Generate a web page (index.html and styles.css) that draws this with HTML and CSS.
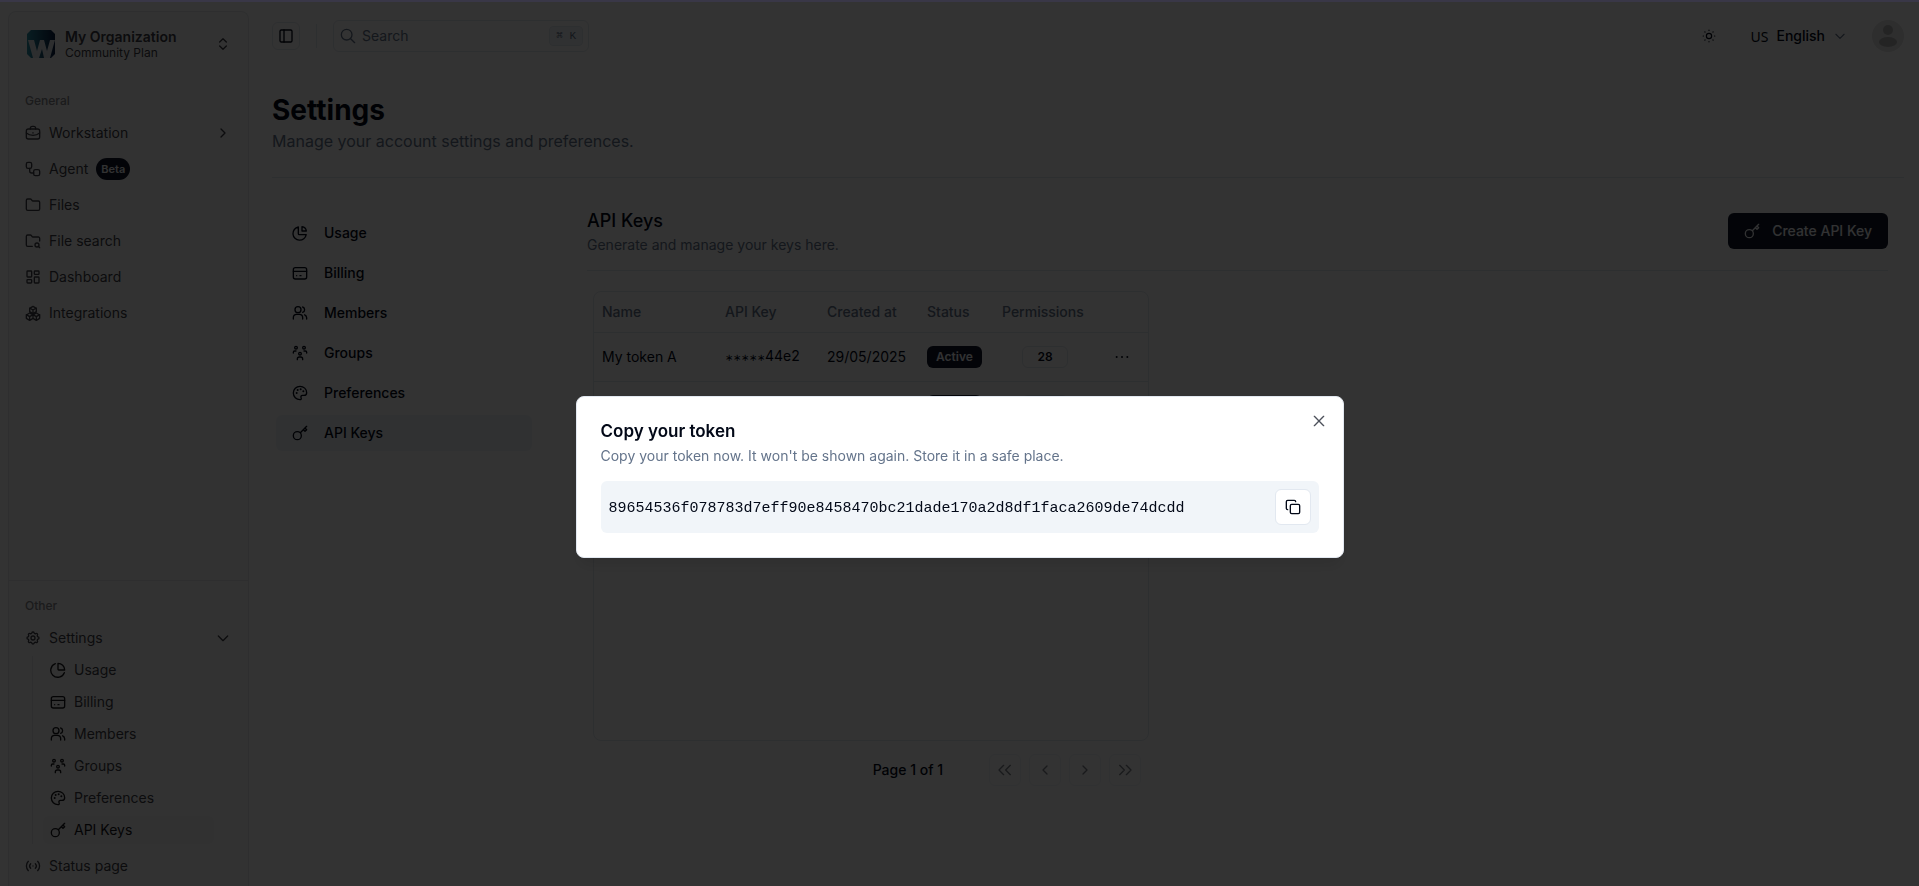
FILE: index.html
```html
<!DOCTYPE html>
<html lang="en">
<head>
    <meta charset="UTF-8">
    <title>Settings - API Keys</title>
    <link rel="stylesheet" href="styles.css">
</head>
<body>
<svg class="sprite" aria-hidden="true">
    <symbol id="briefcase" viewBox="0 0 24 24"><rect x="2" y="6" width="20" height="15" rx="3"/><path d="M8 6V5a3 3 0 0 1 3-3h2a3 3 0 0 1 3 3v1M2 12c3 2.500 6 3.500 10 3.500S19 14.500 22 12M12 11.500v.5"/></symbol>
    <symbol id="workflow" viewBox="0 0 24 24"><rect x="2" y="2" width="8" height="9" rx="2.500"/><rect x="13" y="13" width="9" height="9" rx="2.500"/><path d="M7 11v4a3 3 0 0 0 3 3h3"/></symbol>
    <symbol id="folder" viewBox="0 0 24 24"><path d="M20 20a2 2 0 0 0 2-2V8a2 2 0 0 0-2-2h-7.900a2 2 0 0 1-1.690-.9L9.600 3.900A2 2 0 0 0 7.930 3H4a2 2 0 0 0-2 2v13a2 2 0 0 0 2 2Z"/></symbol>
    <symbol id="folder-search" viewBox="0 0 24 24"><path d="M11 20H4a2 2 0 0 1-2-2V5a2 2 0 0 1 2-2h3.930a2 2 0 0 1 1.660.9l.82 1.200a2 2 0 0 0 1.660.9H20a2 2 0 0 1 2 2v4M22 22l-2-2"/><circle cx="18" cy="18" r="3"/></symbol>
    <symbol id="dashboard" viewBox="0 0 24 24"><rect x="3" y="3" width="7" height="9" rx="1"/><rect x="14" y="3" width="7" height="5" rx="1"/><rect x="14" y="12" width="7" height="9" rx="1"/><rect x="3" y="16" width="7" height="5" rx="1"/></symbol>
    <symbol id="boxes" viewBox="0 0 24 24"><path d="M7 12l5 3v5l-5 3-5-3v-5zM17 12l5 3v5l-5 3-5-3v-5zM12 2l5 3v5l-5 3-5-3V5zM7 17.500l-5-3M7 17.500l5-3M7 17.500V23M17 17.500l-5-3M17 17.500l5-3M17 17.500V23M12 7.500l-5-3M12 7.500l5-3M12 7.500V13"/></symbol>
    <symbol id="gear" viewBox="0 0 24 24"><path d="M10.300 4.300c.4-1.750 2.950-1.750 3.400 0a1.700 1.700 0 0 0 2.550 1.070c1.550-.94 3.320.83 2.380 2.370a1.700 1.700 0 0 0 1.060 2.580c1.760.42 1.760 2.920 0 3.350a1.700 1.700 0 0 0-1.060 2.580c.94 1.540-.83 3.310-2.380 2.370a1.700 1.700 0 0 0-2.550 1.060c-.45 1.750-3 1.750-3.400 0a1.700 1.700 0 0 0-2.580-1.060c-1.540.94-3.310-.83-2.370-2.370a1.700 1.700 0 0 0-1.060-2.580c-1.760-.43-1.760-2.930 0-3.350a1.700 1.700 0 0 0 1.060-2.580c-.94-1.540.83-3.310 2.370-2.370 1 .6 2.300.07 2.580-1.070z"/><circle cx="12" cy="12" r="3"/></symbol>
    <symbol id="pie" viewBox="0 0 24 24"><path d="M12 2v9a1 1 0 0 0 1 1h9A10 10 0 0 0 12 2zM21.500 16A10.500 10.500 0 1 1 8 2.500"/></symbol>
    <symbol id="pie-slice" viewBox="0 0 24 24"><path d="M9.500 3a10 10 0 1 0 11.800 11.500H11a1.500 1.500 0 0 1-1.500-1.500z"/><path d="M15 2.500V9h6.500A7.500 7.500 0 0 0 15 2.500z"/></symbol>
    <symbol id="card" viewBox="0 0 24 24"><rect x="2" y="4" width="20" height="17" rx="3"/><path d="M2 9.500h20M7 16h.01M12 16h1.500"/></symbol>
    <symbol id="users" viewBox="0 0 24 24"><path d="M2 21v-2a5 5 0 0 1 5-5h4a5 5 0 0 1 5 5v2M22 21v-2a5 5 0 0 0-3-4.300M16 3a4.200 4.200 0 0 1 0 8"/><circle cx="9" cy="7" r="4.500"/></symbol>
    <symbol id="group" viewBox="0 0 24 24"><circle cx="6" cy="4" r="2"/><circle cx="18" cy="4" r="2"/><circle cx="12" cy="13" r="2"/><path d="M2 12v-1a2 2 0 0 1 2-2h2M22 12v-1a2 2 0 0 0-2-2h-2M8 22v-1a3 3 0 0 1 3-3h2a3 3 0 0 1 3 3v1"/></symbol>
    <symbol id="palette" viewBox="0 0 24 24"><path d="M12 2a10 10 0 0 0 0 20c1.700 0 2.300-1.300 1.700-2.500-1-2 0-4 2-4H18c2.600 0 4-1.500 4-4C22 6 17.500 2 12 2z"/><path d="M7 12h.01M8.500 7.500h.01M13 6.500h.01M17 9.500h.01" stroke-width="3"/></symbol>
    <symbol id="key" viewBox="0 0 24 24"><circle cx="8" cy="16" r="6"/><path d="M12.500 11.500 22 2M17 7l2.500 2.500L22 7l-2.500-2.500"/></symbol>
    <symbol id="broadcast" viewBox="0 0 24 24"><path d="M5 19a10 10 0 0 1 0-14M19 5a10 10 0 0 1 0 14M8.500 15.500a5 5 0 0 1 0-7M15.500 8.500a5 5 0 0 1 0 7M12 12h.01"/></symbol>
    <symbol id="chevron-right" viewBox="0 0 24 24"><path d="m9 18 6-6-6-6"/></symbol>
    <symbol id="chevron-left" viewBox="0 0 24 24"><path d="m15 18-6-6 6-6"/></symbol>
    <symbol id="chevron-down" viewBox="0 0 24 24"><path d="m5 9 7 7 7-7"/></symbol>
    <symbol id="chevrons-updown" viewBox="0 0 24 24"><path d="m7 15 5 5 5-5M7 9l5-5 5 5"/></symbol>
    <symbol id="first" viewBox="0 0 24 24"><path d="m10 19-7-7 7-7M20 19l-7-7 7-7"/></symbol>
    <symbol id="last" viewBox="0 0 24 24"><path d="m4 19 7-7-7-7M14 19l7-7-7-7"/></symbol>
    <symbol id="panel" viewBox="0 0 24 24"><rect x="3" y="3" width="18" height="18" rx="2"/><path d="M9 3v18"/></symbol>
    <symbol id="search" viewBox="0 0 24 24"><circle cx="10" cy="10" r="8"/><path d="m22 22-6-6"/></symbol>
    <symbol id="sun" viewBox="0 0 24 24"><circle cx="12" cy="12" r="4.500"/><path d="M12 2v.5M12 21.500v.5M2 12h.5M21.500 12h.5M4.900 4.900l.3.3M18.800 18.800l.3.3M4.900 19.100l.3-.3M18.800 5.200l.3-.3"/></symbol>
    <symbol id="dots" viewBox="0 0 24 24"><path d="M4 12h.01M12 12h.01M20 12h.01" stroke-width="3"/></symbol>
    <symbol id="close" viewBox="0 0 24 24"><path d="M5 5l14 14M19 5 5 19"/></symbol>
    <symbol id="copy" viewBox="0 0 24 24"><rect x="8" y="8" width="14" height="14" rx="2"/><path d="M4 16c-1.100 0-2-.9-2-2V4c0-1.100.9-2 2-2h10c1.100 0 2 .9 2 2"/></symbol>
</svg>

<div class="app">
    <aside class="sidebar">
        <button class="org">
            <svg class="logo" viewBox="0 0 28 28">
                <defs>
                    <linearGradient id="logo-fill" x1="0" y1="0" x2="1" y2="0">
                        <stop offset="0" stop-color="#2a91a8"/>
                        <stop offset="1" stop-color="#0b1d42"/>
                    </linearGradient>
                </defs>
                <path d="M4 0h20l4 4v20l-4 4H4l-4-4V4z" fill="url(#logo-fill)"/>
                <path d="M1 10h6l3 11 3-11h4l3 11 3-11h5l-5 18h-6l-2-9-3 9H6z" fill="#dfe5ea"/>
            </svg>
            <span class="org-text">
                <span class="org-name">My Organization</span>
                <span class="org-plan">Community Plan</span>
            </span>
            <svg class="icon"><use href="#chevrons-updown"/></svg>
        </button>

        <nav class="nav">
            <div class="nav-label">General</div>
            <a class="nav-item" href="#"><svg class="icon"><use href="#briefcase"/></svg>Workstation<svg class="icon end"><use href="#chevron-right"/></svg></a>
            <a class="nav-item" href="#"><svg class="icon"><use href="#workflow"/></svg>Agent<span class="badge round">Beta</span></a>
            <a class="nav-item" href="#"><svg class="icon"><use href="#folder"/></svg>Files</a>
            <a class="nav-item" href="#"><svg class="icon"><use href="#folder-search"/></svg>File search</a>
            <a class="nav-item" href="#"><svg class="icon"><use href="#dashboard"/></svg>Dashboard</a>
            <a class="nav-item" href="#"><svg class="icon"><use href="#boxes"/></svg>Integrations</a>
        </nav>

        <nav class="nav nav-other">
            <div class="nav-label">Other</div>
            <a class="nav-item" href="#"><svg class="icon"><use href="#gear"/></svg>Settings<svg class="icon end"><use href="#chevron-down"/></svg></a>
            <div class="subnav">
                <a class="sub-item" href="#"><svg class="icon"><use href="#pie"/></svg>Usage</a>
                <a class="sub-item" href="#"><svg class="icon"><use href="#card"/></svg>Billing</a>
                <a class="sub-item" href="#"><svg class="icon"><use href="#users"/></svg>Members</a>
                <a class="sub-item" href="#"><svg class="icon"><use href="#group"/></svg>Groups</a>
                <a class="sub-item" href="#"><svg class="icon"><use href="#palette"/></svg>Preferences</a>
                <a class="sub-item active" href="#"><svg class="icon"><use href="#key"/></svg>API Keys</a>
            </div>
            <a class="nav-item" href="#"><svg class="icon"><use href="#broadcast"/></svg>Status page</a>
        </nav>
    </aside>

    <main class="main">
        <header class="topbar">
            <button class="toggle" aria-label="Toggle sidebar"><svg class="icon"><use href="#panel"/></svg></button>
            <span class="divider"></span>
            <div class="search">
                <svg class="icon"><use href="#search"/></svg>
                <input type="text" placeholder="Search" aria-label="Search">
                <kbd>⌘ K</kbd>
            </div>
            <button class="theme" aria-label="Theme"><svg class="icon"><use href="#sun"/></svg></button>
            <button class="lang"><span class="flag">US</span>English<svg class="icon"><use href="#chevron-down"/></svg></button>
            <button class="avatar" aria-label="Account">
                <svg viewBox="0 0 32 32"><circle cx="16" cy="16" r="16" fill="#e4e4e4"/><circle cx="16" cy="10" r="5" fill="#b4b4b4"/><ellipse cx="16" cy="22" rx="9" ry="5" fill="#b4b4b4"/></svg>
            </button>
        </header>

        <div class="page-head">
            <h1>Settings</h1>
            <p>Manage your account settings and preferences.</p>
        </div>

        <div class="content">
            <nav class="tabs">
                <a class="tab" href="#"><svg class="icon"><use href="#pie-slice"/></svg>Usage</a>
                <a class="tab" href="#"><svg class="icon"><use href="#card"/></svg>Billing</a>
                <a class="tab" href="#"><svg class="icon"><use href="#users"/></svg>Members</a>
                <a class="tab" href="#"><svg class="icon"><use href="#group"/></svg>Groups</a>
                <a class="tab" href="#"><svg class="icon"><use href="#palette"/></svg>Preferences</a>
                <a class="tab active" href="#"><svg class="icon"><use href="#key"/></svg>API Keys</a>
            </nav>

            <section class="panel">
                <div class="panel-head">
                    <div>
                        <h2>API Keys</h2>
                        <p>Generate and manage your keys here.</p>
                    </div>
                    <button class="create"><svg class="icon"><use href="#key"/></svg>Create API Key</button>
                </div>

                <div class="keys">
                    <div class="table-box">
                        <table>
                            <thead>
                            <tr>
                                <th class="col-name">Name</th>
                                <th class="col-key">API Key</th>
                                <th class="col-date">Created at</th>
                                <th class="col-status">Status</th>
                                <th class="col-perm">Permissions</th>
                                <th></th>
                            </tr>
                            </thead>
                            <tbody>
                            <tr>
                                <td>My token A</td>
                                <td><span class="mask">∗∗∗∗∗</span>44e2</td>
                                <td>29/05/2025</td>
                                <td><span class="badge">Active</span></td>
                                <td class="center"><span class="badge outline">28</span></td>
                                <td class="center"><button class="more" aria-label="Open menu"><svg class="icon"><use href="#dots"/></svg></button></td>
                            </tr>
                            <tr>
                                <td></td>
                                <td></td>
                                <td></td>
                                <td><span class="badge">Active</span></td>
                                <td class="center"><span class="badge outline">28</span></td>
                                <td class="center"><button class="more" aria-label="Open menu"><svg class="icon"><use href="#dots"/></svg></button></td>
                            </tr>
                            </tbody>
                        </table>
                    </div>
                    <div class="pager">
                        <span>Page 1 of 1</span>
                        <div class="pager-buttons">
                            <button disabled aria-label="First page"><svg class="icon"><use href="#first"/></svg></button>
                            <button disabled aria-label="Previous page"><svg class="icon"><use href="#chevron-left"/></svg></button>
                            <button disabled aria-label="Next page"><svg class="icon"><use href="#chevron-right"/></svg></button>
                            <button disabled aria-label="Last page"><svg class="icon"><use href="#last"/></svg></button>
                        </div>
                    </div>
                </div>
            </section>
        </div>
    </main>
</div>

<div class="overlay">
    <div class="modal" role="dialog" aria-labelledby="modal-title">
        <button class="close" aria-label="Close"><svg class="icon"><use href="#close"/></svg></button>
        <h2 id="modal-title">Copy your token</h2>
        <p>Copy your token now. It won't be shown again. Store it in a safe place.</p>
        <div class="token">
            <code>89654536f078783d7eff90e8458470bc21dade170a2d8df1faca2609de74dcdd</code>
            <button class="copy" aria-label="Copy"><svg class="icon"><use href="#copy"/></svg></button>
        </div>
    </div>
</div>
</body>
</html>
```
FILE: styles.css
```css
* {
    box-sizing: border-box;
}

body {
    margin: 0;
    background: #fff;
    color: #020817;
    font-family: Inter, "Liberation Sans", sans-serif;
    font-size: 14px;
    line-height: 20px;
}

h1, h2, p {
    margin: 0;
}

button {
    display: flex;
    align-items: center;
    justify-content: center;
    padding: 0;
    border: 0;
    background: none;
    color: inherit;
    font: inherit;
    cursor: pointer;
}

a {
    color: inherit;
    text-decoration: none;
}

.sprite {
    display: none;
}

.icon {
    flex: none;
    width: 16px;
    height: 16px;
    fill: none;
    stroke: currentColor;
    stroke-width: 2;
    stroke-linecap: round;
    stroke-linejoin: round;
}

.app {
    display: flex;
    height: 100vh;
    padding-left: 8px;
    overflow: hidden;
}

/* Sidebar */

.sidebar {
    display: flex;
    flex-direction: column;
    flex: none;
    width: 241px;
    margin-top: 11px;
    border: 1px solid #e5e7eb;
    border-bottom: 0;
    border-radius: 8px 8px 0 0;
    background: #fafafa;
    color: #3f3f46;
}

.org {
    gap: 10px;
    margin: 8px;
    padding: 8px 9px 8px 10px;
    text-align: left;
}

.logo {
    width: 28px;
    height: 28px;
}

.org-text {
    display: flex;
    flex: 1;
    flex-direction: column;
}

.org-name {
    font-weight: 600;
    line-height: 18px;
}

.org-plan {
    font-size: 12px;
    line-height: 14px;
}

.nav {
    padding: 9px 8px 8px;
}

.nav-label {
    padding: 0 8px;
    color: #85858a;
    font-size: 12px;
    font-weight: 500;
    line-height: 32px;
}

.nav-item {
    display: flex;
    align-items: center;
    gap: 8px;
    height: 32px;
    margin-bottom: 4px;
    padding: 0 9px 0 8px;
}

.end {
    margin-left: auto;
}

.nav-other {
    margin-top: auto;
    padding-bottom: 4px;
    border-top: 1px solid #e5e7eb;
}

.nav-other .nav-item {
    margin-bottom: 0;
}

.subnav {
    display: flex;
    flex-direction: column;
    gap: 4px;
    margin: 2px 16px 6px 15px;
    padding: 0 10px;
    border-left: 1px solid #e5e7eb;
}

.sub-item {
    display: flex;
    align-items: center;
    gap: 8px;
    height: 28px;
    padding: 0 7px;
    border-radius: 6px;
}

.sub-item .icon {
    color: #18181b;
}

.sub-item.active {
    background: #f4f4f5;
    color: #18181b;
}

/* Top bar */

.main {
    flex: 1;
    min-width: 0;
    padding: 19px 15px 0 23px;
}

.topbar {
    display: flex;
    align-items: center;
    height: 33px;
}

.toggle {
    width: 28px;
    height: 28px;
    border: 1px solid #e2e8f0;
    border-radius: 6px;
}

.divider {
    width: 1px;
    height: 24px;
    margin: 0 16px;
    background: #e2e8f0;
}

.search {
    display: flex;
    align-items: center;
    gap: 6px;
    width: 256px;
    height: 32px;
    margin-right: auto;
    padding: 0 5px 0 6px;
    border: 1px solid #e2e8f0;
    border-radius: 6px;
    color: #64748b;
}

.search input {
    flex: 1;
    min-width: 0;
    padding: 1px 0 0;
    border: 0;
    outline: 0;
    background: none;
    color: inherit;
    font: inherit;
}

.search input::placeholder {
    color: #64748b;
}

kbd {
    padding: 0 6px;
    border: 1px solid #e2e8f0;
    border-radius: 4px;
    background: #f1f5f9;
    font-family: "Liberation Mono", monospace;
    font-size: 11px;
    font-weight: 500;
    line-height: 18px;
}

.theme {
    width: 32px;
    height: 32px;
    margin-right: 26px;
}

.theme .icon {
    width: 14px;
    height: 14px;
}

.lang {
    gap: 8px;
    margin-right: 25px;
    font-weight: 500;
}

.lang .icon {
    width: 14px;
    height: 14px;
    color: #64748b;
}

.flag {
    padding-top: 2px;
    font-family: "Noto Sans", sans-serif;
    font-weight: 400;
}

.avatar {
    width: 32px;
    height: 32px;
}

/* Settings page */

.page-head {
    padding: 40px 0 23px;
    border-bottom: 1px solid #e2e8f0;
}

h1 {
    font-size: 28px;
    font-weight: 700;
    line-height: 36px;
}

.page-head p {
    color: #64748b;
    font-size: 16px;
    line-height: 26px;
}

.content {
    display: flex;
    gap: 55px;
    padding: 29px 16px 0 4px;
}

.tabs {
    display: flex;
    flex-direction: column;
    flex: none;
    gap: 4px;
    width: 256px;
    padding-top: 8px;
}

.tab {
    display: flex;
    align-items: center;
    gap: 16px;
    height: 36px;
    padding: 0 16px;
    border-radius: 6px;
    font-weight: 500;
}

.tab.active {
    background: #f1f5f9;
}

.panel {
    flex: 1;
    min-width: 0;
}

.panel-head {
    display: flex;
    align-items: center;
    justify-content: space-between;
    padding-bottom: 15px;
    border-bottom: 1px solid #e2e8f0;
}

.panel-head h2 {
    font-size: 18px;
    font-weight: 500;
    line-height: 28px;
}

.panel-head p {
    color: #64748b;
}

.create {
    gap: 12px;
    height: 36px;
    padding: 0 16px;
    border-radius: 6px;
    background: #0f172a;
    color: #f8fafc;
    font-weight: 500;
}

.keys {
    width: 556px;
    margin: 20px 0 0 6px;
}

.table-box {
    min-height: 450px;
    border: 1px solid #e2e8f0;
    border-radius: 8px;
}

table {
    width: 100%;
    border-collapse: collapse;
    table-layout: fixed;
}

th, td {
    padding: 0 8px;
    text-align: left;
}

th {
    height: 40px;
    color: #64748b;
    font-weight: 500;
}

td {
    height: 49px;
}

tr {
    border-bottom: 1px solid #e2e8f0;
}

.center {
    text-align: center;
}

.col-name {
    width: 123px;
}

.col-key {
    width: 102px;
}

.col-date {
    width: 100px;
}

.col-status {
    width: 75px;
}

.col-perm {
    width: 102px;
}

.mask {
    font-size: 10px;
}

.badge {
    display: inline-block;
    padding: 2px 9px;
    border-radius: 6px;
    background: #0f172a;
    color: #f8fafc;
    font-size: 12px;
    font-weight: 600;
    line-height: 18px;
}

.badge.round {
    padding: 2px 5px;
    border-radius: 11px;
    font-size: 11px;
}

.badge.outline {
    padding: 1px 14px;
    border: 1px solid #e2e8f0;
    background: none;
    color: #020817;
}

.more {
    margin: auto;
}

.pager {
    display: flex;
    align-items: center;
    justify-content: flex-end;
    gap: 46px;
    padding: 13px 8px 0 0;
    font-weight: 500;
}

.pager-buttons {
    display: flex;
    gap: 8px;
}

.pager-buttons button {
    width: 32px;
    height: 32px;
    border: 1px solid #e2e8f0;
    border-radius: 6px;
    opacity: .5;
}

/* Token dialog */

.overlay {
    position: fixed;
    inset: 0;
    display: flex;
    align-items: center;
    justify-content: center;
    padding-top: 66px;
    border-top: 2px solid rgba(80, 70, 150, .2);
    background: rgba(0, 0, 0, .8);
}

.modal {
    position: relative;
    width: 768px;
    max-width: 100%;
    padding: 24px;
    border: 1px solid #e2e8f0;
    border-radius: 8px;
    background: #fff;
    box-shadow: 0 10px 15px -3px rgba(0, 0, 0, .1);
}

.modal h2 {
    font-size: 17px;
    font-weight: 600;
    line-height: 20px;
}

.modal p {
    padding: 5px 0 15px;
    color: #64748b;
}

.token {
    display: flex;
    align-items: center;
    justify-content: space-between;
    height: 52px;
    padding: 8px;
    border-radius: 6px;
    background: #f1f5f9;
}

code {
    padding-top: 3px;
    font-family: "Liberation Mono", monospace;
    font-size: 15px;
}

.copy {
    width: 36px;
    height: 36px;
    border: 1px solid #e2e8f0;
    border-radius: 6px;
    background: #fff;
}

.close {
    position: absolute;
    top: 16px;
    right: 16px;
    opacity: .7;
}
```
